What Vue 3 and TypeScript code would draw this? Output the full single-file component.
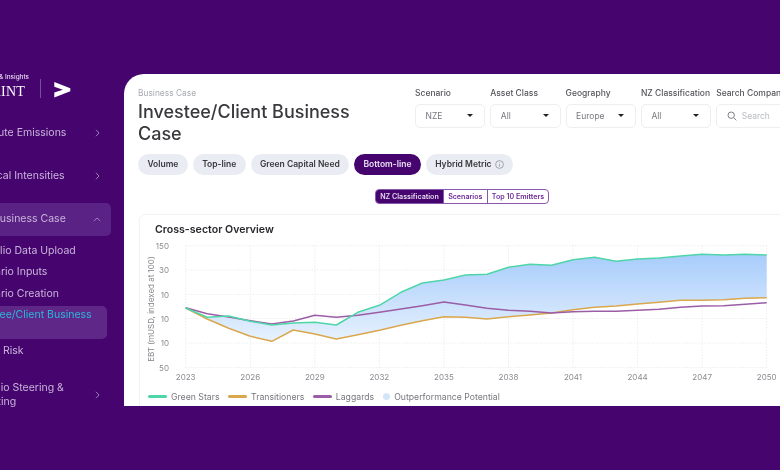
<script setup lang="ts">
const yearStep = 581 / 27
const xAt = (i: number) => 185.7 + i * yearStep
const yAt = (z: number) => 205 + z / 3

const green = [312,340,336,352,363,357,355,363,325,304,265,237,228,213,211,190,181,184,167,160,172,165,162,156,151,153,151,153]
const gold = [312,345,373,397,412,378,390,405,392,379,364,350,338,340,345,338,333,327,317,310,306,300,295,289,289,287,283,281]
const purple = [311,329,339,350,360,351,334,340,334,325,315,305,294,303,313,319,322,327,323,322,322,319,316,310,306,305,301,296]

const toPoints = (s: number[]) => s.map((z, i) => `${xAt(i).toFixed(1)},${yAt(z).toFixed(1)}`)
const greenPts = toPoints(green).join(' ')
const goldPts = toPoints(gold).join(' ')
const purplePts = toPoints(purple).join(' ')
const areaPts = [...toPoints(green), ...toPoints(gold).reverse()].join(' ')

const gridY = [246.7, 271, 295.5, 319.5, 344, 368.5]
const yLabels = ['150', '30', '10', '10', '10', '50']
const xTicks = [2023, 2026, 2029, 2032, 2035, 2038, 2041, 2044, 2047, 2050].map((year) => ({
  year,
  x: xAt(year - 2023),
}))

const subItems = [
  { label: 'Portfolio Data Upload', active: false },
  { label: 'Scenario Inputs', active: false },
  { label: 'Scenario Creation', active: false },
  { label: 'Investee/Client Business Case', active: true },
  { label: 'Credit Risk', active: false },
]

const filters = [
  { label: 'Scenario', value: 'NZE' },
  { label: 'Asset Class', value: 'All' },
  { label: 'Geography', value: 'Europe' },
  { label: 'NZ Classification', value: 'All' },
]

const pills = ['Volume', 'Top-line', 'Green Capital Need', 'Bottom-line']
const segments = ['NZ Classification', 'Scenarios', 'Top 10 Emitters']
const legend = [
  { label: 'Green Stars', color: '#4fd6a8' },
  { label: 'Transitioners', color: '#d9a74e' },
  { label: 'Laggards', color: '#9a5da6' },
]
</script>

<template>
  <div class="stage">
    <aside class="sidebar">
      <div class="logo">
        <div class="logo-text">
          <span class="logo-small">Climate &amp; Insights</span>
          <span class="logo-big">FOOTPRINT</span>
        </div>
        <i class="logo-sep"></i>
        <svg class="logo-mark" width="17" height="16" viewBox="0 0 17 16">
          <path d="M0.3 0 L16.3 6.2 V9.3 L0.3 15.4 V10.6 L8.8 7.7 L0.3 4.7 Z" fill="#fff" />
        </svg>
      </div>

      <nav class="nav">
        <div class="row">
          <span>Absolute Emissions</span>
          <svg class="chev" width="5" height="8" viewBox="0 0 5 8"><path d="M1 .8 4 4 1 7.2" /></svg>
        </div>
        <div class="row">
          <span>Physical Intensities</span>
          <svg class="chev" width="5" height="8" viewBox="0 0 5 8"><path d="M1 .8 4 4 1 7.2" /></svg>
        </div>
        <div class="row row-open">
          <span class="bc-label">Business Case</span>
          <svg class="chev" width="8" height="5" viewBox="0 0 8 5"><path d="M.8 4 4 1 7.2 4" /></svg>
        </div>
        <div class="subs">
          <div v-for="s in subItems" :key="s.label" class="sub" :class="{ 'sub-active': s.active }">
            {{ s.label }}
          </div>
        </div>
        <div class="row row-tall">
          <span class="tall-label">Portfolio Steering &amp;<br />Reporting</span>
          <svg class="chev" width="5" height="8" viewBox="0 0 5 8"><path d="M1 .8 4 4 1 7.2" /></svg>
        </div>
      </nav>
    </aside>

    <main class="panel">
      <header class="head">
        <div class="head-title">
          <div class="crumb">Business Case</div>
          <h1>Investee/Client Business Case</h1>
        </div>
        <div class="filters">
          <div v-for="f in filters" :key="f.label" class="filter">
            <label>{{ f.label }}</label>
            <div class="select">
              <span>{{ f.value }}</span>
              <i class="caret"></i>
            </div>
          </div>
          <div class="filter filter-search">
            <label>Search Company</label>
            <div class="select search">
              <svg width="10" height="10" viewBox="0 0 10 10" fill="none" stroke="#7d7d84" stroke-width="1">
                <circle cx="4.2" cy="4.2" r="3.2" />
                <path d="M6.6 6.6 9.3 9.3" />
              </svg>
              <span>Search</span>
            </div>
          </div>
        </div>
      </header>

      <div class="pills">
        <button v-for="p in pills" :key="p" class="pill" :class="{ 'pill-on': p === 'Bottom-line' }">{{ p }}</button>
        <button class="pill">
          Hybrid Metric
          <svg class="info" width="9" height="9" viewBox="0 0 9 9" fill="none" stroke="#85858c" stroke-width=".7">
            <circle cx="4.5" cy="4.5" r="3.9" />
            <path d="M4.5 4V6.6M4.5 2.4V3.1" />
          </svg>
        </button>
      </div>

      <div class="segments">
        <span v-for="(s, i) in segments" :key="s" class="seg" :class="{ 'seg-on': i === 0 }">{{ s }}</span>
      </div>

      <section class="card">
        <h2>Cross-sector Overview</h2>
        <svg class="chart" width="641" height="146" viewBox="139 240 641 146">
          <defs>
            <linearGradient id="areaFill" gradientUnits="userSpaceOnUse" x1="0" y1="255" x2="0" y2="345">
              <stop offset="0" stop-color="#a7ccfb" />
              <stop offset="1" stop-color="#e9f3fe" />
            </linearGradient>
          </defs>
          <line v-for="y in gridY" :key="y" class="grid" x1="185.7" x2="767" :y1="y" :y2="y" />
          <line v-for="t in xTicks" :key="t.year" class="grid" :x1="t.x" :x2="t.x" y1="246.7" y2="368.5" />
          <polygon :points="areaPts" fill="url(#areaFill)" />
          <polyline :points="goldPts" class="ln" stroke="#d9a74e" />
          <polyline :points="purplePts" class="ln" stroke="#9a5da6" />
          <polyline :points="greenPts" class="ln" stroke="#4fd6a8" />
          <text v-for="(l, i) in yLabels" :key="i" class="tick" x="169" :y="gridY[i] + 3" text-anchor="end">{{ l }}</text>
          <text v-for="t in xTicks" :key="'x' + t.year" class="tick" :x="t.x" y="381" text-anchor="middle">{{ t.year }}</text>
          <text class="axis" transform="translate(154 310) rotate(-90)" text-anchor="middle">EBT (mUSD, indexed at 100)</text>
        </svg>
        <div class="legend">
          <div v-for="l in legend" :key="l.label" class="lg">
            <i class="lg-line" :style="{ background: l.color }"></i>
            <span>{{ l.label }}</span>
          </div>
          <div class="lg">
            <i class="lg-dot"></i>
            <span>Outperformance Potential</span>
          </div>
        </div>
      </section>
    </main>
  </div>
</template>

<style>
html, body { margin: 0; background: #46046f; }
</style>

<style scoped>
.stage {
  width: 780px;
  height: 470px;
  display: flex;
  align-items: flex-start;
  overflow: hidden;
  background: #46046f;
  font-family: Inter, "Liberation Sans", sans-serif;
  filter: blur(0.4px);
}

/* Sidebar is cropped by the left side of the picture */
.sidebar {
  width: 154px;
  margin-left: -30px;
  flex: none;
  box-sizing: border-box;
  padding-top: 71px;
  color: #c9b4da;
  font-size: 10.5px;
}
.logo {
  display: flex;
  align-items: center;
  height: 30px;
  margin-bottom: 15.5px;
}
.logo-text {
  width: 59px;
  display: flex;
  flex-direction: column;
  align-items: flex-end;
  color: #fff;
  white-space: nowrap;
}
.logo-small { font-size: 6.4px; font-weight: 500; line-height: 10px; color: #e8dcf1; }
.logo-big {
  font-family: "Liberation Serif", serif;
  font-size: 14px;
  line-height: 17px;
  margin-right: 4px;
  letter-spacing: .2px;
  margin-top: 1px;
}
.logo-sep {
  width: 1px;
  height: 19px;
  margin: 5px 13px 0 11px;
  background: #7a4a9c;
}
.logo-mark { margin-top: 7px; }

.nav { display: flex; flex-direction: column; }
.row {
  height: 33px;
  margin-bottom: 10px;
  box-sizing: border-box;
  padding-right: 24.5px;
  display: flex;
  align-items: center;
  justify-content: space-between;
  white-space: nowrap;
  line-height: 14.5px;
}
.row-open {
  width: 141px;
  padding-right: 10px;
  margin-bottom: 4px;
  background: #5a2284;
  border-radius: 5px;
}
.bc-label { margin-left: 23px; }
.chev { flex: none; fill: none; stroke: #9c7fb6; stroke-width: 1; }
.subs { display: flex; flex-direction: column; margin-bottom: 17px; }
.sub {
  height: 21.5px;
  line-height: 21.5px;
  white-space: nowrap;
}
.sub-active {
  width: 136.5px;
  height: 33px;
  margin: 1.5px 0;
  box-sizing: border-box;
  padding: 1.5px 0 0;
  border-radius: 5px;
  background: #5f2888;
  color: #2bb6dc;
  line-height: 15px;
  white-space: normal;
}
.row-tall { width: 129.5px; padding-right: 0; }
.tall-label { margin-left: -2px; }

/* Main panel */
.panel {
  margin-top: 74px;
  flex: none;
  width: 656px;
  height: 332px;
  box-sizing: border-box;
  padding: 14px 0 0 14px;
  background: #fff;
  border-top-left-radius: 20px;
  overflow: hidden;
}
.head { display: flex; align-items: flex-start; height: 66px; }
.head-title { width: 277px; flex: none; }
.crumb { font-size: 8.4px; line-height: 11px; color: #a9acb3; }
h1 {
  margin: 2px 0 0;
  width: 215px;
  font-size: 18px;
  line-height: 21.5px;
  font-weight: 500;
  color: #38383d;
}
.filters { display: flex; gap: 5px; flex: none; }
.filter { width: 70.3px; flex: none; }
.filter-search { width: 120px; }
.filter label {
  display: block;
  height: 11px;
  line-height: 11px;
  margin-bottom: 4.5px;
  font-size: 8.5px;
  font-weight: 500;
  color: #55555b;
  white-space: nowrap;
}
.select {
  height: 24px;
  box-sizing: border-box;
  display: flex;
  align-items: center;
  justify-content: space-between;
  padding: 0 11px 0 9.5px;
  border: 1px solid #eceef1;
  border-radius: 5px;
  font-size: 8.5px;
  color: #77777e;
}
.caret {
  width: 0;
  height: 0;
  border-left: 3px solid transparent;
  border-right: 3px solid transparent;
  border-top: 3.5px solid #222;
}
.search { justify-content: flex-start; gap: 5px; color: #b9bbc0; }

.pills { display: flex; gap: 5px; }
.pill {
  height: 20.5px;
  padding: 0 9.4px;
  display: flex;
  align-items: center;
  gap: 3px;
  border: 0;
  border-radius: 11px;
  background: #e9edf3;
  font-family: inherit;
  font-size: 8.5px;
  font-weight: 600;
  color: #38383d;
  white-space: nowrap;
}
.pill-on { background: #46046f; color: #eadff2; }

.segments {
  display: flex;
  width: fit-content;
  margin: 14.5px 0 0 237px;
  height: 14.6px;
  box-sizing: border-box;
  border: 1px solid #8a58ab;
  border-radius: 4px;
  overflow: hidden;
}
.seg {
  padding: 0 4.2px;
  display: flex;
  align-items: center;
  font-size: 7.1px;
  font-weight: 600;
  color: #6d2c96;
  white-space: nowrap;
  border-left: 1px solid #8a58ab;
}
.seg-on { background: #46046f; color: #e4d8ee; border-left: 0; }

.card {
  margin: 10.5px 0 0 1px;
  width: 700px;
  height: 200px;
  box-sizing: border-box;
  border: 1px solid #f1f2f4;
  border-radius: 6px;
}
h2 {
  margin: 8px 0 0 15px;
  height: 14px;
  font-size: 10.6px;
  line-height: 14px;
  font-weight: 600;
  color: #26262b;
}
.chart { display: block; margin-top: 2px; margin-left: -1px; }
.grid { stroke: #e4e5e9; stroke-width: .8; stroke-dasharray: 1.2 1.6; }
.ln { fill: none; stroke-width: 1.5; stroke-linejoin: round; }
.tick { font-size: 8px; fill: #8b8b92; }
.axis { font-size: 8px; fill: #85858c; }

.legend { display: flex; margin: 5.5px 0 0 8px; gap: 8.5px; }
.lg { display: flex; align-items: center; gap: 4px; font-size: 8.7px; line-height: 12px; color: #77777e; white-space: nowrap; }
.lg-line { width: 19px; height: 2.8px; border-radius: 2px; }
.lg-dot { width: 7.5px; height: 7.5px; border-radius: 50%; background: #d4e4f9; }
</style>
